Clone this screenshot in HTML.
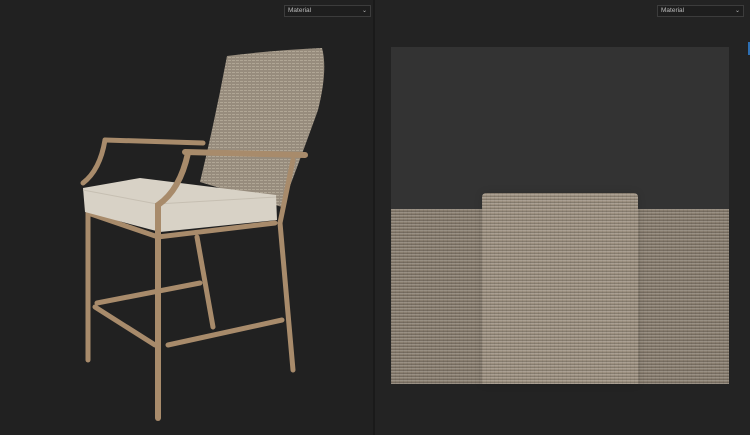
<!DOCTYPE html>
<html><head><style>
html,body{margin:0;padding:0;width:750px;height:435px;overflow:hidden;background:#222;font-family:"Liberation Sans",sans-serif}
.l{position:absolute;left:0;top:0;width:373px;height:435px;background:#212121}
.div{position:absolute;left:373px;top:0;width:2px;height:435px;background:#1a1a1a}
.r{position:absolute;left:375px;top:0;width:375px;height:435px;background:#232323}
.sel{position:absolute;top:5px;height:10px;border:1px solid #3c3c3c;background:#1e1e1e;color:#bbb;font-size:6.5px;line-height:10px;padding-left:3px;box-sizing:content-box}
.sel span{position:absolute;right:3px;top:0;font-size:6px}
.weave{background-color:#8a7f71;background-image:repeating-linear-gradient(0deg,rgba(255,255,255,.14) 0 1px,rgba(0,0,0,.14) 1px 2px,transparent 2px 3px),repeating-linear-gradient(90deg,rgba(0,0,0,.06) 0 1px,transparent 1px 4px)}
</style></head><body>
<div class="l"></div><div class="div"></div><div class="r"></div>
<div class="sel" style="left:284px;width:82px">Material<span>⌄</span></div>
<div class="sel" style="left:657px;width:82px">Material<span>⌄</span></div>
<div style="position:absolute;left:748px;top:42px;width:2px;height:13px;background:#2d6fb3"></div>
<div style="position:absolute;left:391px;top:47px;width:338px;height:337px;background:#333"></div>
<div class="weave" style="position:absolute;left:391px;top:209px;width:338px;height:175px"></div>
<div class="weave" style="position:absolute;left:482px;top:193px;width:156px;height:191px;border-radius:4px 4px 0 0;background-color:#9d9181;box-shadow:0 0 8px rgba(0,0,0,.15)"></div>
<svg style="position:absolute;left:0;top:0" width="373" height="435">
<defs><pattern id="w" width="4" height="3" patternUnits="userSpaceOnUse"><rect width="4" height="3" fill="#978c7d"/><rect width="3" height="1" fill="#b0a695"/></pattern></defs>
<path d="M227,56 Q275,50 322,48 Q328,70 318,110 Q300,160 282,207 L200,182 Q215,120 227,56Z" fill="url(#w)"/>
<g stroke="#a88b6b" stroke-width="5" fill="none" stroke-linecap="round">
<path d="M88,213 L88,360"/><path d="M197,237 L213,327"/><path d="M280,223 L293,370"/>
<path d="M168,345 L282,320"/><path d="M95,307 L155,345"/><path d="M97,303 L200,283"/>
<path d="M88,213 L158,237 L275,223"/>
<path d="M105,140 L203,143"/><path d="M105,140 Q100,170 83,183"/>
<path d="M293,160 L280,223"/>
</g>
<path d="M83,188 L140,178 L276,195 L277,220 L160,232 L85,212Z" fill="#d8d2c6"/>
<path d="M83,190 L157,204 L276,197" stroke="#c6bfb2" stroke-width="1" fill="none"/>
<g stroke="#a88b6b" stroke-width="6" fill="none" stroke-linecap="round">
<path d="M158,233 L158,418"/>
<path d="M185,152 L305,155"/><path d="M188,153 Q180,190 158,205 L158,233"/>
</g>
</svg>
</body></html>
